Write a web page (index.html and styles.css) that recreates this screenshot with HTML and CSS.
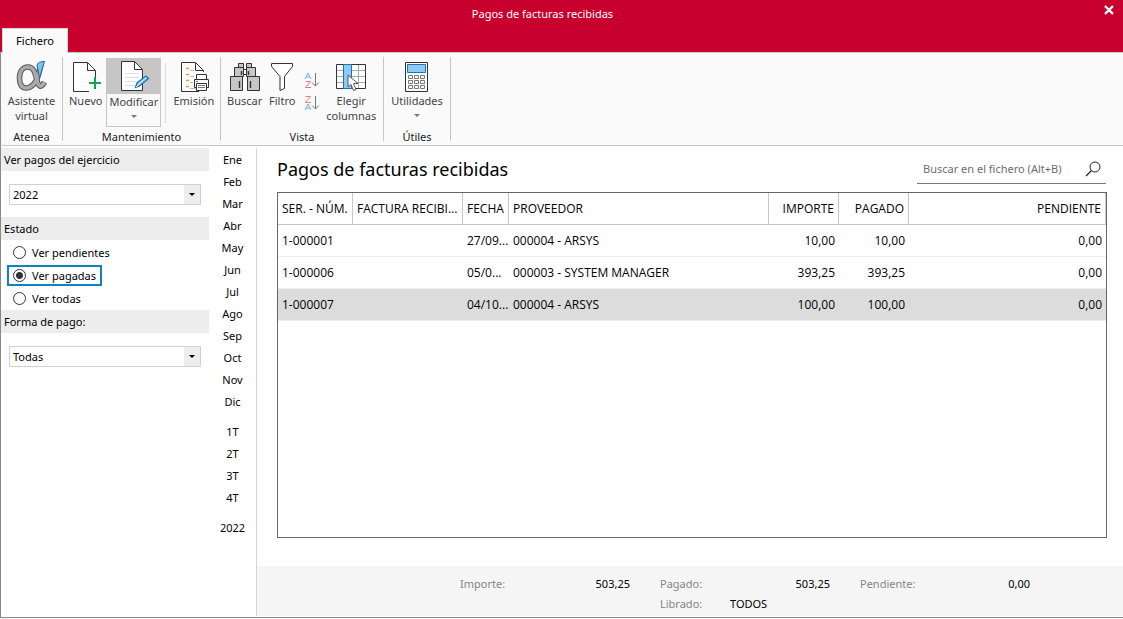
FILE: index.html
```html
<!DOCTYPE html>
<html lang="es">
<head>
<meta charset="utf-8">
<title>Pagos de facturas recibidas</title>
<link rel="stylesheet" href="styles.css">
</head>
<body>
<div class="window">
  <header class="titlebar">
    <h1 class="window-title">Pagos de facturas recibidas</h1>
    <button class="close" type="button" aria-label="Cerrar">
      <svg width="10" height="10" viewBox="0 0 10 10"><path d="M1 1L9 9M9 1L1 9" stroke="#fff" stroke-width="2.4"/></svg>
    </button>
  </header>
  <nav class="tabs"><button class="tab" type="button">Fichero</button></nav>

  <div class="ribbon">
    <section class="group group-atenea">
      <div class="tools">
        <button class="tool" type="button">
          <svg width="32" height="32" viewBox="0 0 32 32" fill="none">
            <path d="M25 4C23 14 20 28 10 28C5 28 3.500 23 3.500 18C3.500 11 7 7 12 7C18 7 19 13 21 20C22 26 25 29 28.500 22" stroke="#595959" stroke-width="5.600"/>
            <path d="M25 4C23 14 20 28 10 28C5 28 3.500 23 3.500 18C3.500 11 7 7 12 7C18 7 19 13 21 20C22 26 25 29 28.500 22" stroke="#aaa" stroke-width="3.600"/>
            <path d="M21 5Q22 1.500 28.500 1.500L23.500 18Z" fill="#83beec" stroke="#1769aa"/>
          </svg>
          <span>Asistente<br>virtual</span>
        </button>
      </div>
      <h2 class="group-name">Atenea</h2>
    </section>

    <section class="group group-mant">
      <div class="tools">
        <button class="tool" type="button">
          <svg width="32" height="32" viewBox="0 0 32 32" fill="none">
            <path d="M25.500 18V10.500L17.500 2.500H3.500V31.500H19M17.500 3V10.500H25" fill="#fff" stroke="#333"/>
            <path d="M25 17V29M19 23H31" stroke="#12a54f" stroke-width="2"/>
          </svg>
          <span>Nuevo</span>
        </button>
        <button class="tool tool-split" type="button">
          <span class="split-top">
          <svg width="32" height="32" viewBox="0 0 32 32" fill="none">
            <path d="M3.500 2.500H16.500L24.500 10.500V31.500H3.500Z" fill="#fff" stroke="#333"/>
            <path d="M16.500 3V10.500H24" stroke="#333"/>
            <path d="M7 14.500H21M7 18.500H21M7 22.500H19M7 26.500H17" stroke="#ddd"/>
            <path d="M17.500 28.500L19 24L28 17L30.500 19.500L21.500 27Z" fill="#8fc8f4" stroke="#1675b8" stroke-width="1.300"/>
            <path d="M18 28L20.500 25.500L28 18.500" stroke="#e3f3ff"/>
          </svg></span>
          <span>Modificar</span>
          <i class="caret"></i>
        </button>
        <span class="divider"></span>
        <button class="tool" type="button">
          <svg width="32" height="32" viewBox="0 0 32 32" fill="none">
            <path d="M25.500 12V10.500L17.500 2.500H3.500V31.500H21" fill="#fff" stroke="#333"/>
            <path d="M17.500 3V10.500H25" stroke="#333"/>
            <path d="M8 8.500H11M8 14.500H11M8 20.500H11M8 26.500H11" stroke="#f09b16" stroke-width="1.400"/>
            <path d="M12 10.500H16M12 16.500H16M12 22.500H15M12 28.500H19" stroke="#bbb"/>
            <path d="M18.500 19V14.500H28.500V19" fill="#fff" stroke="#333"/>
            <path d="M16.500 19.500H30.500V27.500H16.500Z" fill="#fff" stroke="#333"/>
            <path d="M18.500 23.500H28.500V30.500H18.500Z" fill="#fff" stroke="#333"/>
            <path d="M20 25.500H27M20 27.500H27" stroke="#777"/><path d="M18 21.500H20" stroke="#2389cc"/>
          </svg>
          <span>Emisión</span>
        </button>
      </div>
      <h2 class="group-name">Mantenimiento</h2>
    </section>

    <section class="group group-vista">
      <div class="tools">
        <button class="tool" type="button">
          <svg width="32" height="32" viewBox="0 0 32 32" fill="none">
            <g fill="#c6c6c6" stroke="#333">
              <path d="M9.500 3.500H14.500V7.500H9.500ZM17.500 3.500H22.500V7.500H17.500Z"/>
              <path d="M5.500 7.500H14.500V16.500H5.500ZM17.500 7.500H26.500V16.500H17.500Z"/>
              <path d="M1.500 16.500H13.500V30.500H1.500ZM18.500 16.500H30.500V30.500H18.500Z"/>
              <path d="M14.500 9.500H17.500V14.500H14.500Z" fill="#fff"/>
            </g>
            <path d="M12.500 11V15M19.500 11V15M10.500 21V28M21.500 21V28" stroke="#333" stroke-width="1.400"/>
          </svg>
          <span>Buscar</span>
        </button>
        <button class="tool" type="button">
          <svg width="32" height="32" viewBox="0 0 32 32" fill="none">
            <path d="M5.500 3.500H26.500V6.500L18.500 16.500V28.500L14 30.500V16.500L5.500 6.500Z" fill="#fff" stroke="#333"/>
          </svg>
          <span>Filtro</span>
        </button>
        <div class="sorts">
          <button class="sort" type="button" aria-label="Orden ascendente">
            <svg width="16" height="16" viewBox="0 0 16 16" fill="none">
              <path d="M1 7L4 1L7 7M2 5H6" stroke="#6ab1dd"/><path d="M1.500 9.500H6.500L1.500 15.500H7" stroke="#f0757e"/><path d="M11.500 1V14M8 10.500L11.500 14L15 10.500" stroke="#777"/>
            </svg>
          </button>
          <button class="sort" type="button" aria-label="Orden descendente">
            <svg width="16" height="16" viewBox="0 0 16 16" fill="none">
              <path d="M1.500 1.500H6.500L1.500 7.500H7" stroke="#f0757e"/><path d="M1 15L4 9L7 15M2 13H6" stroke="#6ab1dd"/><path d="M11.500 1V14M8 10.500L11.500 14L15 10.500" stroke="#777"/>
            </svg>
          </button>
        </div>
        <button class="tool" type="button">
          <svg width="32" height="32" viewBox="0 0 32 32" fill="none">
            <path d="M1.500 4.500H30.500V28.500H1.500Z" fill="#fff"/>
            <path d="M2 10.500H30M2 16.500H30M2 22.500H30M16.500 5V28M23.500 5V28" stroke="#aaa"/>
            <path d="M1.500 4.500H30.500V28.500H1.500Z" stroke="#333"/>
            <path d="M8.500 4.500H16.500V28.500H8.500Z" fill="#91c9f2" stroke="#1675b8"/>
            <path d="M13 15V27L16 24.500L18.500 30.500L21 29.500L18.500 23.500H23Z" fill="#fff" stroke="#555"/>
          </svg>
          <span>Elegir<br>columnas</span>
        </button>
      </div>
      <h2 class="group-name">Vista</h2>
    </section>

    <section class="group group-utiles">
      <div class="tools">
        <button class="tool" type="button">
          <svg width="32" height="32" viewBox="0 0 32 32" fill="none">
            <path d="M4.500 2.500H26.500V31.500H4.500Z" fill="#fff" stroke="#333"/>
            <path d="M6.500 4.500H24.500V12.500H6.500Z" fill="#91c9f2" stroke="#1675b8"/>
            <path d="M7.500 15.500H11.500V18.500H7.500ZM13.500 15.500H17.500V18.500H13.500ZM19.500 15.500H23.500V18.500H19.500ZM7.500 20.500H11.500V23.500H7.500ZM13.500 20.500H17.500V23.500H13.500ZM19.500 20.500H23.500V23.500H19.500ZM7.500 25.500H11.500V28.500H7.500ZM13.500 25.500H17.500V28.500H13.500ZM19.500 25.500H23.500V28.500H19.500Z" stroke="#777"/>
          </svg>
          <span>Utilidades</span>
          <i class="caret"></i>
        </button>
      </div>
      <h2 class="group-name">Útiles</h2>
    </section>
  </div>

  <div class="body">
    <aside class="filters">
      <h3 class="filter-head"><label for="ejercicio">Ver pagos del ejercicio</label></h3>
      <div class="combo"><select id="ejercicio"><option>2022</option></select></div>
      <h3 class="filter-head">Estado</h3>
      <div class="radios">
        <label class="radio"><input type="radio" name="estado">Ver pendientes</label>
        <label class="radio radio-on"><input type="radio" name="estado" checked>Ver pagadas</label>
        <label class="radio"><input type="radio" name="estado">Ver todas</label>
      </div>
      <h3 class="filter-head"><label for="forma">Forma de pago:</label></h3>
      <div class="combo"><select id="forma"><option>Todas</option></select></div>
    </aside>

    <nav class="periods">
      <div class="period-set">
        <button type="button">Ene</button><button type="button">Feb</button><button type="button">Mar</button><button type="button">Abr</button><button type="button">May</button><button type="button">Jun</button><button type="button">Jul</button><button type="button">Ago</button><button type="button">Sep</button><button type="button">Oct</button><button type="button">Nov</button><button type="button">Dic</button>
      </div>
      <div class="period-set">
        <button type="button">1T</button><button type="button">2T</button><button type="button">3T</button><button type="button">4T</button>
      </div>
      <div class="period-set"><button type="button">2022</button></div>
    </nav>

    <main class="main">
      <div class="main-head">
        <h2 class="page-title">Pagos de facturas recibidas</h2>
        <div class="search">
          <input type="text" aria-label="Buscar en el fichero" placeholder="Buscar en el fichero (Alt+B)">
          <button type="button" aria-label="Buscar">
            <svg width="16" height="16" viewBox="0 0 16 16" fill="none" stroke="#222"><circle cx="10" cy="6" r="5"/><path d="M6.500 9.500L1 15" stroke-width="1.300"/></svg>
          </button>
        </div>
      </div>
      <div class="grid">
        <table>
          <colgroup><col class="c-num"><col class="c-fac"><col class="c-fecha"><col class="c-prov"><col class="c-imp"><col class="c-imp"><col></colgroup>
          <thead>
            <tr><th>SER. - NÚM.</th><th>FACTURA RECIBI...</th><th>FECHA</th><th>PROVEEDOR</th><th class="num">IMPORTE</th><th class="num">PAGADO</th><th class="num">PENDIENTE</th></tr>
          </thead>
          <tbody>
            <tr><td>1-000001</td><td></td><td>27/09...</td><td>000004 - ARSYS</td><td class="num">10,00</td><td class="num">10,00</td><td class="num">0,00</td></tr>
            <tr><td>1-000006</td><td></td><td>05/0...</td><td>000003 - SYSTEM MANAGER</td><td class="num">393,25</td><td class="num">393,25</td><td class="num">0,00</td></tr>
            <tr class="selected"><td>1-000007</td><td></td><td>04/10...</td><td>000004 - ARSYS</td><td class="num">100,00</td><td class="num">100,00</td><td class="num">0,00</td></tr>
          </tbody>
        </table>
      </div>
      <footer class="totals">
        <dl class="total"><dt>Importe:</dt><dd>503,25</dd></dl>
        <div>
          <dl class="total"><dt>Pagado:</dt><dd>503,25</dd></dl>
          <dl class="total total-text"><dt>Librado:</dt><dd>TODOS</dd></dl>
        </div>
        <dl class="total"><dt>Pendiente:</dt><dd>0,00</dd></dl>
      </footer>
    </main>
  </div>
</div>
</body>
</html>
```
FILE: styles.css
```css
* { box-sizing: border-box; }
body { margin: 0; background: #fff; color: #000; font: 11px/15px "Noto Sans", "Open Sans", sans-serif; }
h1, h2, h3, dl, dd { margin: 0; font-size: inherit; font-weight: normal; }
button, input, select { font: inherit; color: inherit; }
button { border: 0; padding: 0; background: none; }
svg { display: block; }

.window { display: flex; flex-direction: column; min-height: 100vh; padding-bottom: 1px; }

.titlebar { display: flex; height: 28px; background: #c8002d; color: #fff; }
.window-title { flex: 1; padding: 6px 10px 0 0; text-align: center; }
.close { display: flex; justify-content: center; padding-top: 5px; width: 28px; }
.tabs { display: flex; height: 24px; padding-left: 2px; background: #c8002d; }
.tab { position: relative; width: 66px; height: 25px; padding-bottom: 1px; background: #fafafa; border: 1px solid #d5d5d5; border-bottom: 0; }

.ribbon { display: flex; height: 94px; background: #fafafa; border: 1px solid #c6c6c6; border-width: 1px 0 1px 1px; border-left-color: #888; }
.group { display: flex; flex-direction: column; justify-content: space-between; margin: 4px 0; border-right: 1px solid #c6c6c6; }
.group-atenea { width: 62px; }
.group-mant { width: 158px; }
.group-vista { width: 163px; }
.group-utiles { width: 67px; }
.tools { display: flex; justify-content: center; }
.group-name { text-align: center; color: #222; margin-bottom: -3px; }
.tool { display: flex; flex-direction: column; align-items: center; color: #444; padding: 3px 4px 0; }
.tool svg { margin-bottom: 1px; flex: none; }
.group-mant .tools { justify-content: flex-start; padding-left: 2px; }
.tool-split { width: 55px; height: 69px; padding: 0; border: 1px solid #c6c6c6; margin-top: 1px; }
.split-top { display: flex; justify-content: center; align-self: stretch; height: 35px; background: #c6c6c6; }
.caret { border: 3px solid transparent; border-top: 3px solid #777; margin-top: 6px; }
.divider { width: 1px; margin: 6px 3px 4px 4px; background: #ddd; }
.group-vista .tools { justify-content: flex-start; padding-left: 4px; }
.group-vista .tool { padding: 3px 2px 0; }
.sorts { display: flex; flex-direction: column; gap: 7px; padding: 15px 4px 0; }

.body { flex: 1; display: flex; border-left: 1px solid #888; border-bottom: 1px solid #888; padding: 2px 0 1px; }
.filters { width: 208px; }
.filter-head { height: 23px; padding: 4px 3px; background: #ededed; }
.combo { position: relative; margin: 13px 8px 12px; height: 21px; border: 1px solid #d0d0d0; }
.combo select { display: block; width: 100%; height: 19px; padding: 0 3px; border: 0; background: linear-gradient(#ededed, #ededed) right / 16px 100% no-repeat #fff; appearance: none; }
.combo::after { content: ""; position: absolute; right: 5px; top: 8px; border: 3px solid transparent; border-top-color: #000; pointer-events: none; }
.radios { display: flex; flex-direction: column; align-items: flex-start; gap: 2px; padding: 2px 0 1px 6px; }
.radio { display: flex; align-items: center; gap: 6px; height: 21px; padding: 0 4px; border: 2px solid transparent; }
.radio-on { border-color: #0f82c6; }
.radio input { appearance: none; width: 13px; height: 13px; margin: 0; border: 1px solid #333; border-radius: 50%; background: #fff; }
.radio input:checked { background: radial-gradient(circle, #333 3px, #fff 4px); }

.periods { display: flex; flex-direction: column; gap: 8px; width: 48px; border-right: 1px solid #d5d5d5; }
.period-set { display: flex; flex-direction: column; }
.period-set button { height: 22px; }

.main { flex: 1; display: flex; flex-direction: column; min-width: 0; }
.main-head { display: flex; justify-content: space-between; align-items: flex-start; height: 44px; padding: 0 17px 0 20px; }
.page-title { font-size: 18px; line-height: 26px; padding-top: 8px; }
.search { display: flex; align-items: center; width: 189px; height: 29px; margin-top: 7px; padding: 0 5px 0 6px; border-bottom: 1px solid #777; }
.search input { flex: 1; min-width: 0; padding: 0 0 2px; border: 0; background: none; outline: 0; }
.search input::placeholder { color: #6e6e6e; opacity: 1; }
.grid { flex: 1; margin: 0 16px 28px 20px; border: 1px solid #666; font: 12px/16px "Open Sans", "Noto Sans", sans-serif; }
table { width: 100%; table-layout: fixed; border-collapse: separate; border-spacing: 0; }
.c-num { width: 75px; }
.c-fac { width: 110px; }
.c-fecha { width: 46px; }
.c-prov { width: 260px; }
.c-imp { width: 70px; }
th, td { height: 32px; padding: 0 4px; text-align: left; font-weight: normal; white-space: nowrap; border-bottom: 1px solid #ededed; }
th { border-right: 1px solid #c6c6c6; border-bottom-color: #c6c6c6; }
.num { text-align: right; }
.selected td { background: #dcdcdc; }
.totals { display: flex; gap: 30px; height: 50px; padding: 8px 0 0 203px; background: #f5f5f5; }
.total { display: flex; justify-content: space-between; width: 170px; height: 20px; padding-top: 2px; }
.total dt { color: #858585; }
.total-text { justify-content: flex-start; }
.total-text dt { width: 70px; }
```
